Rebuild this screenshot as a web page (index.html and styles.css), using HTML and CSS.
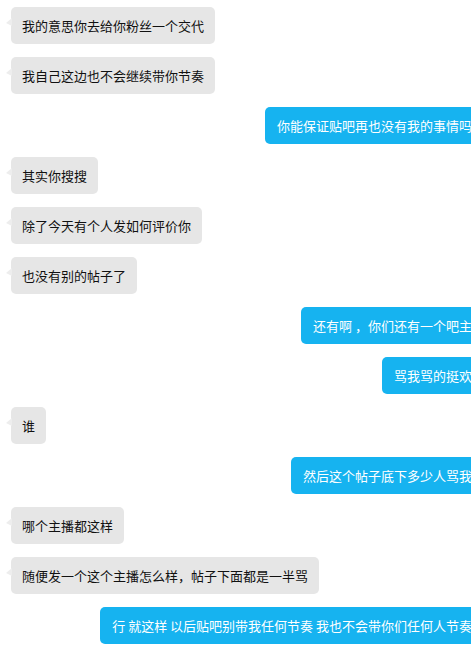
FILE: index.html
```html
<!DOCTYPE html>
<html>
<head>
  <title>Chat</title>
  <meta name="viewport" content="width=device-width, initial-scale=1">
  <link rel="stylesheet" href="styles.css">
</head>
<body>
  <!-- Chat history -->
  <div class="chat">
    <div class="row"><div class="bubble">我的意思你去给你粉丝一个交代</div></div>
    <div class="row"><div class="bubble">我自己这边也不会继续带你节奏</div></div>
    <div class="row me"><div class="bubble">你能保证贴吧再也没有我的事情吗？</div></div>
    <div class="row"><div class="bubble">其实你搜搜</div></div>
    <div class="row"><div class="bubble">除了今天有个人发如何评价你</div></div>
    <div class="row"><div class="bubble">也没有别的帖子了</div></div>
    <div class="row me"><div class="bubble">还有啊 ，你们还有一个吧主吗</div></div>
    <div class="row me"><div class="bubble">骂我骂的挺欢的</div></div>
    <div class="row"><div class="bubble">谁</div></div>
    <div class="row me"><div class="bubble">然后这个帖子底下多少人骂我了</div></div>
    <div class="row"><div class="bubble">哪个主播都这样</div></div>
    <div class="row"><div class="bubble">随便发一个这个主播怎么样，帖子下面都是一半骂</div></div>
    <div class="row me"><div class="bubble">行 就这样 以后贴吧别带我任何节奏 我也不会带你们任何人节奏了</div></div>
  </div>
</body>
</html>
```

FILE: styles.css
```css
/* Page */
html, body {
  margin: 0;
  background: #ffffff;
  overflow: hidden;
}

/* Column is wider than the window, so my own bubbles run off the right edge */
.chat {
  width: 486px;
  padding: 7px 0 0 11px;
  display: flex;
  flex-direction: column;
  gap: 13px;
  font-family: "Noto Sans CJK SC", "Microsoft YaHei", sans-serif;
  font-size: 13px;
}

.row {
  display: flex;
}

.row.me {
  justify-content: flex-end;
}

/* Message bubbles */
.bubble {
  position: relative;
  height: 37px;
  line-height: 37px;
  padding: 0 11px;
  border-radius: 5px;
  background-color: #e6e6e6;
  color: #111;
  white-space: nowrap;
}

.bubble::before {
  content: "";
  position: absolute;
  left: -5px;
  top: 11px;
  border-top: 5px solid transparent;
  border-right: 6px solid #ededed;
  border-bottom: 3px solid transparent;
}

.row.me .bubble {
  padding: 0 12px;
  background-color: #16b3f0;
  color: #fff;
}

.row.me .bubble::before {
  display: none;
}
```
